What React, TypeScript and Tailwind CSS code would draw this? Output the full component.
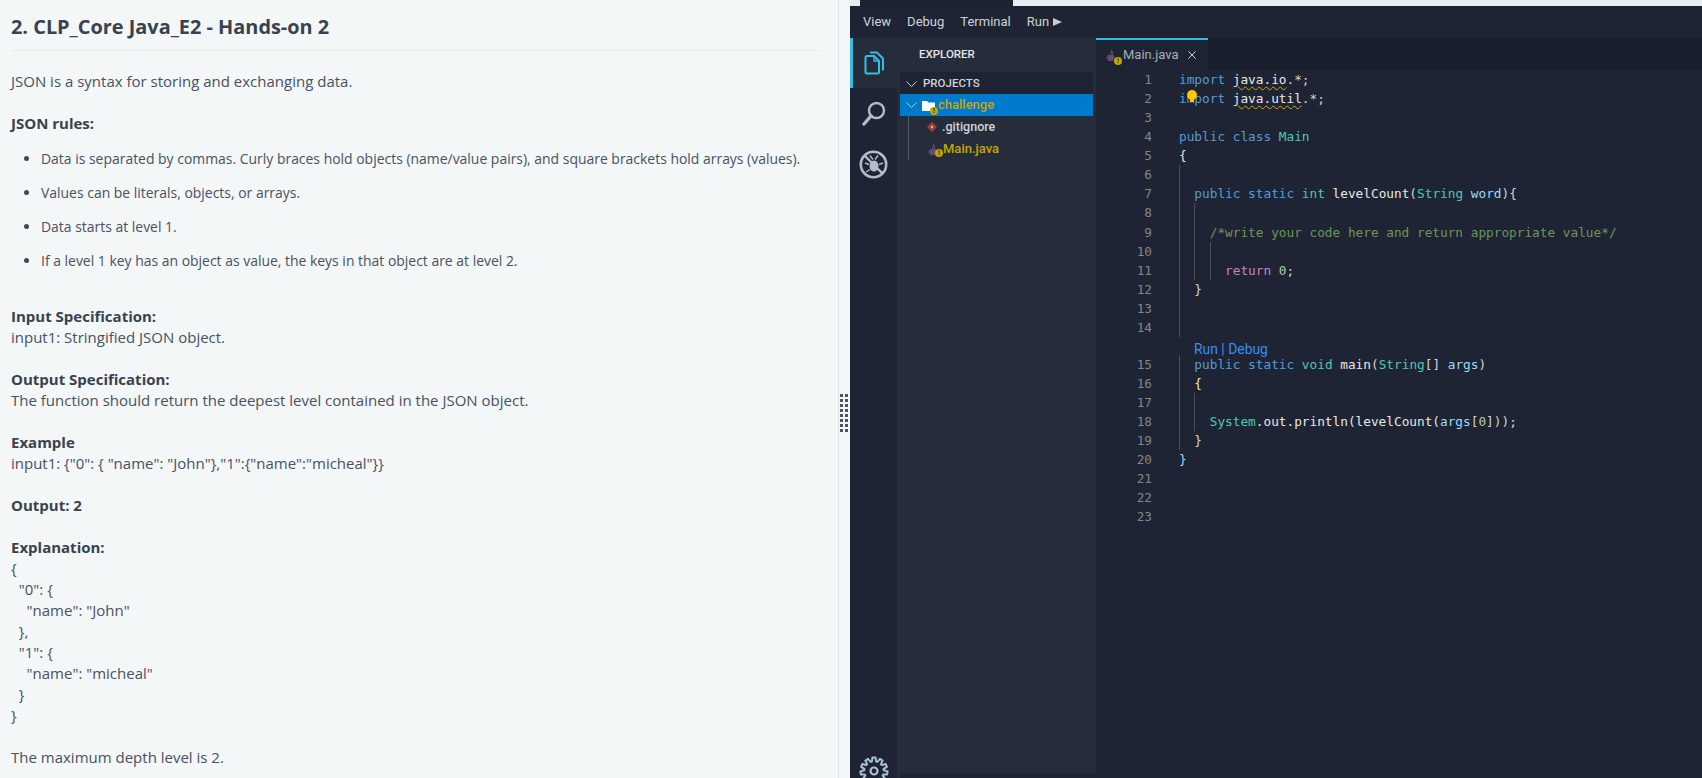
import React from "react";

const C = {
  kw: "text-[#569cd6]",
  ty: "text-[#4ec9b0]",
  fn: "text-[#dcdcaa]",
  va: "text-[#9cdcfe]",
  cm: "text-[#6a9955]",
  pu: "text-[#d4d4d4]",
  mg: "text-[#c586c0]",
  nm: "text-[#b5cea8]",
  wh: "text-[#e8e8e8]",
  br: "text-[#f2e6b0]",
};

type Tok = [string, string];
const lines: { n: number; g: number[]; t: Tok[]; lens?: boolean }[] = [
  { n: 1, g: [], t: [["import", C.kw], [" ", C.pu], ["java.io", "SQ"], [".*;", C.pu]] },
  { n: 2, g: [], t: [["import", C.kw], [" ", C.pu], ["java.util", "SQ"], [".*;", C.pu]] },
  { n: 3, g: [], t: [] },
  { n: 4, g: [], t: [["public", C.kw], [" ", C.pu], ["class", C.kw], [" ", C.pu], ["Main", C.ty]] },
  { n: 5, g: [], t: [["{", C.br]] },
  { n: 6, g: [0], t: [] },
  { n: 7, g: [0], t: [["  ", C.pu], ["public", C.kw], [" ", C.pu], ["static", C.kw], [" ", C.pu], ["int", C.ty], [" ", C.pu], ["levelCount", C.wh], ["(", C.pu], ["String", C.ty], [" ", C.pu], ["word", C.va], ["){", C.pu]] },
  { n: 8, g: [0, 1], t: [] },
  { n: 9, g: [0, 1], t: [["    ", C.pu], ["/*write your code here and return appropriate value*/", C.cm]] },
  { n: 10, g: [0, 1, 2], t: [] },
  { n: 11, g: [0, 1, 2], t: [["      ", C.pu], ["return", C.mg], [" ", C.pu], ["0", C.nm], [";", C.pu]] },
  { n: 12, g: [0], t: [["  ", C.pu], ["}", C.pu]] },
  { n: 13, g: [0], t: [] },
  { n: 14, g: [0], t: [] },
  { n: 15, g: [0], lens: true, t: [["  ", C.pu], ["public", C.kw], [" ", C.pu], ["static", C.kw], [" ", C.pu], ["void", C.ty], [" ", C.pu], ["main", C.wh], ["(", C.pu], ["String", C.ty], ["[] ", C.pu], ["args", C.va], [")", C.pu]] },
  { n: 16, g: [0], t: [["  ", C.pu], ["{", C.br]] },
  { n: 17, g: [0, 1], t: [] },
  { n: 18, g: [0, 1], t: [["    ", C.pu], ["System", C.ty], [".out.println(levelCount(", C.wh], ["args", C.va], ["[", C.pu], ["0", C.nm], ["]));", C.pu]] },
  { n: 19, g: [0], t: [["  ", C.pu], ["}", C.pu]] },
  { n: 20, g: [], t: [["}", C.va]] },
  { n: 21, g: [], t: [] },
  { n: 22, g: [], t: [] },
  { n: 23, g: [], t: [] },
];

const squiggle =
  "underline decoration-wavy decoration-[#d4a800] decoration-1 underline-offset-2 text-[#e8e8e8]";

function Code() {
  return (
    <div className="flex-1 font-['DejaVu_Sans_Mono',monospace] text-[12.75px] leading-[19.07px] whitespace-pre">
      {lines.map((l) => (
        <React.Fragment key={l.n}>
          {l.lens && (
            <div className="pl-[83px] pt-[3px] h-[18px] leading-[18px] font-['Roboto',sans-serif] text-[13.9px] text-[#3a8df5]">
              <span className="ml-[15px]">Run | Debug</span>
            </div>
          )}
          <div className="flex h-[19.07px]">
            <div className="w-[56px] text-right text-[#858585] shrink-0">{l.n}</div>
            <div className="ml-[27px] relative flex-1">
              {l.g.map((g) => (
                <span
                  key={g}
                  className={
                    "absolute top-0 bottom-0 w-px bg-[#4a4f57] " +
                    (g === 0 ? "left-0" : g === 1 ? "left-[15px]" : "left-[31px]")
                  }
                />
              ))}
              {l.t.map(([s, c], i) => (
                <span key={i} className={c === "SQ" ? squiggle : c}>
                  {s}
                </span>
              ))}
              {l.n === 2 && (
                <svg className="absolute left-[8px] top-[1px]" width="10" height="13" viewBox="0 0 10 13">
                  <circle cx="5" cy="5" r="5" fill="#ffc600" />
                  <rect x="3" y="9" width="4" height="3" fill="#ffc600" />
                </svg>
              )}
            </div>
          </div>
        </React.Fragment>
      ))}
    </div>
  );
}

function Warn({ className }: { className: string }) {
  return (
    <span
      className={
        "absolute w-[8px] h-[8px] rounded-full bg-[#c9a400] text-[#1e2433] text-[7px] leading-[8px] font-bold text-center font-['Liberation_Sans',sans-serif] " +
        className
      }
    >
      !
    </span>
  );
}

function JavaIcon() {
  return (
    <svg width="10" height="11" viewBox="0 0 10 11" fill="none" stroke="#7a5a8a" strokeWidth="1">
      <path d="M5.5 0C7 1.8 3.5 2.6 5 4.5M7 2C6 3 6 3.6 6.5 4.5" />
      <path d="M1.5 6h6.5M0.5 8h8M2 10h5.5" strokeWidth="1.3" />
    </svg>
  );
}

function FilesIcon() {
  return (
    <svg width="21" height="24" viewBox="0 0 21 24" fill="none" stroke="#35bde6" strokeWidth="2" strokeLinejoin="round">
      <path d="M1.5 6.5a1.5 1.5 0 0 1 1.5-1.5h7l5 5v11a1.5 1.5 0 0 1-1.5 1.5H3a1.5 1.5 0 0 1-1.5-1.5z" />
      <path d="M10 5v5h5" strokeWidth="1.4" />
      <path d="M6 1.5h7l6 6v12" />
    </svg>
  );
}

function SearchIcon() {
  return (
    <svg width="24" height="25" viewBox="0 0 24 25" fill="none" stroke="#b5bcc5" strokeWidth="2.4">
      <circle cx="14.5" cy="9.5" r="7.5" />
      <path d="M9 15L2 23" strokeWidth="3.4" strokeLinecap="round" />
    </svg>
  );
}

function DebugIcon() {
  return (
    <svg width="29" height="29" viewBox="0 0 29 29" fill="none" stroke="#b5bcc5" strokeWidth="2">
      <circle cx="14.5" cy="14.5" r="12.7" strokeWidth="2.6" />
      <path d="M5.5 5.5L23.5 23.5" strokeWidth="2.4" />
      <ellipse cx="15" cy="16" rx="4.5" ry="5.5" fill="#b5bcc5" stroke="none" />
      <path d="M11 5.5l3 4M19 5.5l-3 4M6 13l4 1.5M24 13l-4 1.5M7 22l4-2.5M23 22l-4-2.5" strokeWidth="1.4" />
    </svg>
  );
}

function gearPath() {
  const teeth = 11;
  const pts: string[] = [];
  for (let i = 0; i < teeth; i++) {
    const a = (i / teeth) * Math.PI * 2 - Math.PI / 2;
    const s = (Math.PI * 2) / teeth;
    const add = (r: number, o: number) =>
      pts.push((15 + r * Math.cos(a + o)).toFixed(2) + " " + (15 + r * Math.sin(a + o)).toFixed(2));
    add(9.8, -s * 0.38);
    add(13.6, -s * 0.2);
    add(13.6, s * 0.2);
    add(9.8, s * 0.38);
  }
  return "M" + pts.join("L") + "Z";
}

function GearIcon() {
  return (
    <svg width="30" height="30" viewBox="0 0 30 30" fill="none" stroke="#a9c0d4" strokeWidth="2" strokeLinejoin="round">
      <path d={gearPath()} />
      <circle cx="15" cy="15" r="3.5" strokeWidth="2.2" />
    </svg>
  );
}

function Chevron() {
  return (
    <svg width="11" height="6" viewBox="0 0 11 6" fill="none" stroke="#c5c8cc" strokeWidth="1">
      <path d="M0.5 0.5L5.5 5.5L10.5 0.5" />
    </svg>
  );
}

function Bullet({ children }: { children: React.ReactNode }) {
  return (
    <li className="relative pl-[30px] h-[34px] leading-[20px] text-[13.95px]">
      <span className="absolute left-[13px] top-[7px] w-[5px] h-[5px] rounded-full bg-[#3f4955]" />
      {children}
    </li>
  );
}

function Problem() {
  return (
    <div className="w-[850px] shrink-0 flex relative">
      <div className="w-[838px] pl-[11px] pr-[20px] text-[#4a5160] font-['Open_Sans',sans-serif] text-[15px] leading-[21px]">
        <h1 className="pt-[15px] pb-[12px] mr-[-2px] border-b border-[#e6eaed] text-[19.9px] leading-[23px] font-bold text-[#39424e]">
          2. CLP_Core Java_E2 - Hands-on 2
        </h1>
        <p className="mt-[20px]">JSON is a syntax for storing and exchanging data.</p>
        <p className="mt-[21px] font-bold text-[#39424e]">JSON rules:</p>
        <ul className="mt-[15px]">
          <Bullet>Data is separated by commas. Curly braces hold objects (name/value pairs), and square brackets hold arrays (values).</Bullet>
          <Bullet>Values can be literals, objects, or arrays.</Bullet>
          <Bullet>Data starts at level 1.</Bullet>
          <Bullet>If a level 1 key has an object as value, the keys in that object are at level 2.</Bullet>
        </ul>
        <p className="mt-[21px] font-bold text-[#39424e]">Input Specification:</p>
        <p>input1: Stringified JSON object.</p>
        <p className="mt-[21px] font-bold text-[#39424e]">Output Specification:</p>
        <p>The function should return the deepest level contained in the JSON object.</p>
        <p className="mt-[21px] font-bold text-[#39424e]">Example</p>
        <p>{'input1: {"0": { "name": "John"},"1":{"name":"micheal"}}'}</p>
        <p className="mt-[21px] font-bold text-[#39424e]">Output: 2</p>
        <p className="mt-[21px] font-bold text-[#39424e]">Explanation:</p>
        <div className="whitespace-pre">
          {'{\n  "0": {\n    "name": "John"\n  },\n  "1": {\n    "name": "micheal"\n  }\n}'}
        </div>
        <p className="mt-[21px]">The maximum depth level is 2.</p>
      </div>
      <div className="w-px bg-[#dfe5e8]" />
      <div className="grid grid-cols-2 gap-[2px] absolute left-[840px] top-[394px]">
        {Array.from({ length: 16 }).map((_, i) => (
          <span key={i} className="w-[3px] h-[3px] bg-[#4b5563]" />
        ))}
      </div>
    </div>
  );
}

export default function App() {
  return (
    <div className="h-[778px] w-[1702px] flex overflow-hidden bg-[#f3f7f8]">
      <Problem />
      <div className="flex-1 flex flex-col relative overflow-hidden">
        <div className="h-[6px] flex shrink-0 bg-[#e7ecef]">
          <div className="ml-[10px] w-[153px] bg-[#1c2230]" />
        </div>
        <div className="h-[32px] shrink-0 bg-[#1e2433] flex items-center pl-[13px] gap-[16px] text-[13px] text-[#cfd3d8] font-['Roboto',sans-serif]">
          <span>View</span>
          <span>Debug</span>
          <span>Terminal</span>
          <span className="flex items-center gap-[4px]">
            Run
            <span className="w-0 h-0 border-y-[4.5px] border-y-transparent border-l-[9px] border-l-[#c8ccd0]" />
          </span>
        </div>
        <div className="flex-1 flex min-h-0">
          <div className="w-[47px] shrink-0 bg-[#1e2433] flex flex-col items-center">
            <div className="w-full h-[50px] bg-[#262d3a] border-l-[3px] border-[#35bde6] flex items-center justify-center pr-[1px]">
              <FilesIcon />
            </div>
            <div className="mt-[13px]"><SearchIcon /></div>
            <div className="mt-[24px]"><DebugIcon /></div>
            <div className="mt-auto mb-[-8px]"><GearIcon /></div>
          </div>
          <div className="w-[199px] shrink-0 bg-[#262d3a] flex flex-col font-['Roboto',sans-serif] text-[12.5px]">
            <div className="h-[34px] pl-[22px] flex items-center text-[11.5px] font-medium text-[#e4e6e8]">EXPLORER</div>
            <div className="ml-[3px] mr-[3px] flex-1 flex flex-col">
              <div className="h-[22px] pt-[1px] bg-[#1e2433] flex items-center pl-[6px] gap-[6px] text-[11.5px] text-[#cfd3d8] font-medium">
                <Chevron /> PROJECTS
              </div>
              <div className="h-[22px] bg-[#007acc] flex items-center pl-[6px] text-[#c9a400] text-[13px] font-medium relative">
                <Chevron />
                <svg className="ml-[5px]" width="13" height="11" viewBox="0 0 13 11" fill="#fff"><path d="M0 1h5l1.5 1.5H13V11H0z" /></svg>
                <Warn className="left-[30px] top-[13px]" />
                <span className="ml-[3px]">challenge</span>
              </div>
              <div className="h-[22px] flex items-center pl-[18px] ml-[8px] border-l border-[#555b63] text-[#cfd3d8] text-[12.5px] font-medium">
                <svg width="10" height="10" viewBox="0 0 10 10"><path d="M5 0l5 5-5 5-5-5z" fill="#a33b3b" /><circle cx="5" cy="5" r="1.2" fill="#e0b0b0" /></svg>
                <span className="ml-[5px]">.gitignore</span>
              </div>
              <div className="h-[22px] flex items-center pl-[19px] ml-[8px] border-l border-[#555b63] text-[#c9a400] text-[13px] font-medium relative">
                <JavaIcon />
                <Warn className="left-[26px] top-[11px]" />
                <span className="ml-[5px]">Main.java</span>
              </div>
              <div className="flex-1" />
              <div className="h-[5px] bg-[#1e2433] mr-[-3px]" />
            </div>
          </div>
          <div className="flex-1 bg-[#1e2433] flex flex-col min-w-0">
            <div className="h-[32px] shrink-0 flex bg-[#181e2b]">
              <div className="w-[112px] border-t-2 border-[#35bde6] bg-[#1e2433] flex items-center pl-[10px] text-[13px] text-[#a8adb5] font-['Roboto',sans-serif] relative">
                <JavaIcon />
                <Warn className="left-[18px] top-[17px]" />
                <span className="ml-[7px]">Main.java</span>
                <svg className="ml-[9px]" width="8" height="8" viewBox="0 0 8 8" stroke="#d4d4d4" strokeWidth="1"><path d="M0.5 0.5L7.5 7.5M7.5 0.5L0.5 7.5" /></svg>
              </div>
            </div>
            <Code />
          </div>
        </div>
      </div>
    </div>
  );
}
